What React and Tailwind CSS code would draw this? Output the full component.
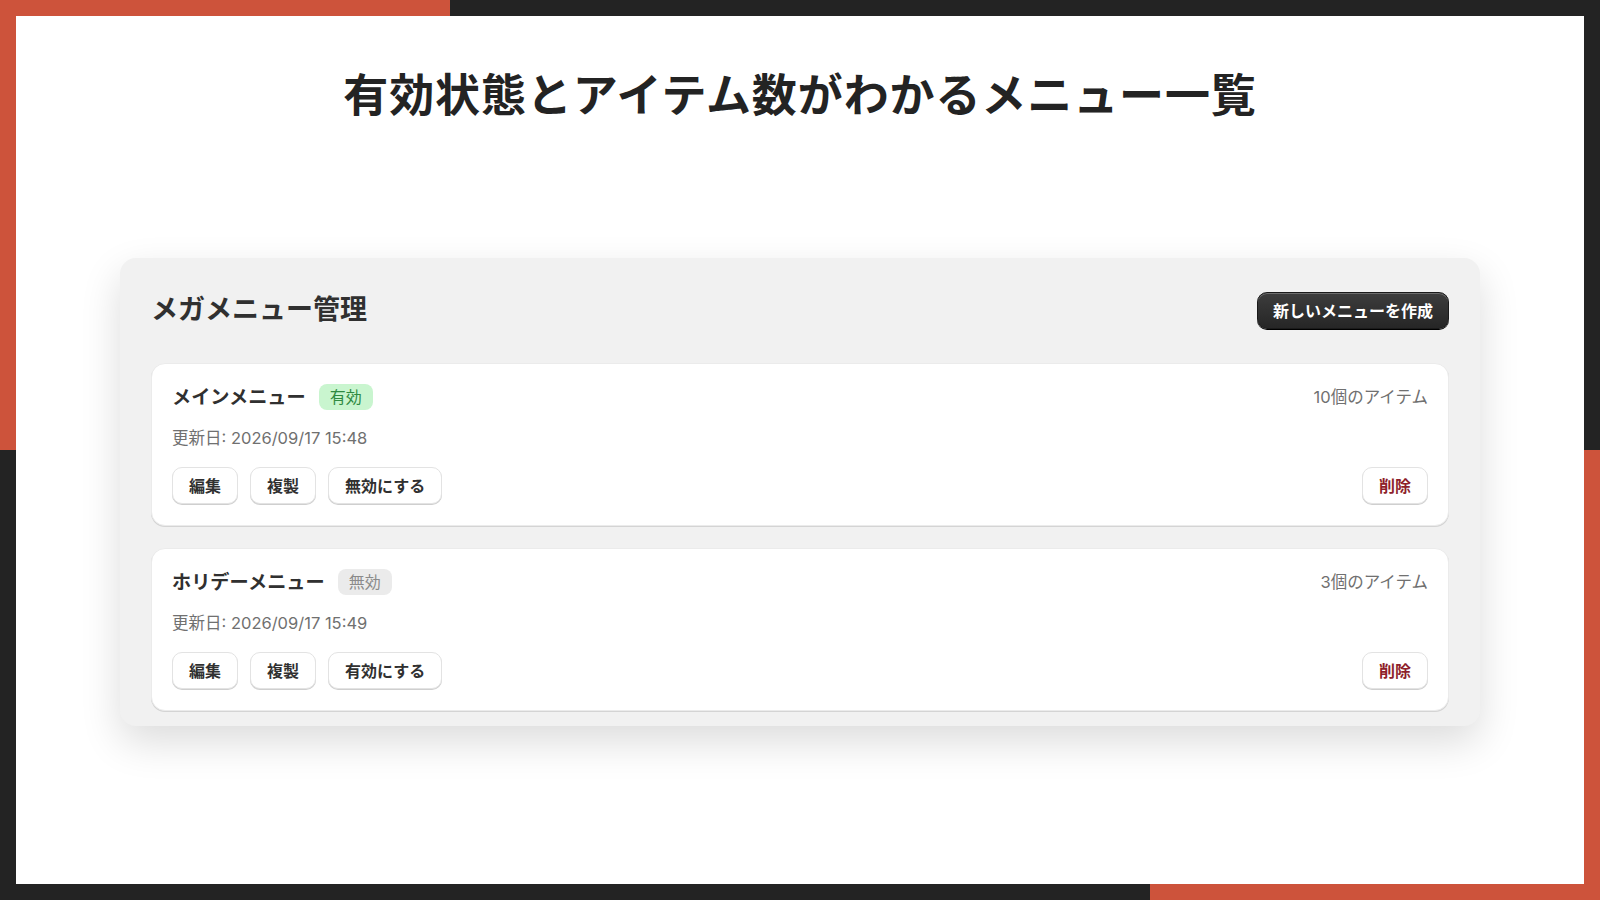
const font = { fontFamily: 'Inter, "Noto Sans CJK JP", sans-serif' }

const menus = [
  { name: 'メインメニュー', active: true, updated: '2026/09/17 15:48', items: 10 },
  { name: 'ホリデーメニュー', active: false, updated: '2026/09/17 15:49', items: 3 },
]

const Btn = ({ children, danger }) => (
  <button
    className={`h-[37px] px-[16px] rounded-[10px] bg-white text-[16px] font-bold leading-none border border-[#e3e3e3] shadow-[0_1px_0_#cfcfcf] ${
      danger ? 'text-[#8e1f2b]' : 'text-[#303030]'
    }`}
  >
    {children}
  </button>
)

const MenuCard = ({ menu }) => (
  <div className="bg-white rounded-[14px] border border-[#ebebeb] shadow-[0_1px_0_#d4d4d4] px-[20px] pt-[20px] pb-[21px]">
    <div className="flex items-center justify-between h-[26px]">
      <div className="flex items-center gap-[13px]">
        <span className="text-[19.2px] font-bold text-[#303030]">{menu.name}</span>
        {menu.active ? (
          <span className="h-[26px] px-[11px] flex items-center rounded-[8px] bg-[#c9f5cf] text-[#2f8a41] text-[16px]">
            有効
          </span>
        ) : (
          <span className="h-[26px] px-[11px] flex items-center rounded-[8px] bg-[#ebebeb] text-[#8a8a8a] text-[16px]">
            無効
          </span>
        )}
      </div>
      <span className="text-[16.5px] text-[#707070]">{menu.items}個のアイテム</span>
    </div>
    <p className="mt-[16px] text-[16.5px] text-[#707070] leading-[24px]">更新日: {menu.updated}</p>
    <div className="mt-[17px] flex items-center justify-between">
      <div className="flex gap-[12px]">
        <Btn>編集</Btn>
        <Btn>複製</Btn>
        <Btn>{menu.active ? '無効にする' : '有効にする'}</Btn>
      </div>
      <Btn danger>削除</Btn>
    </div>
  </div>
)

export default function App() {
  return (
    <div className="w-[1600px] h-[900px] bg-[#232323] relative overflow-hidden" style={font}>
      {/* frame accents */}
      <div className="absolute left-0 top-0 w-[450px] h-[16px] bg-[#cd533b]" />
      <div className="absolute left-0 top-0 w-[16px] h-[450px] bg-[#cd533b]" />
      <div className="absolute right-0 top-[450px] w-[16px] h-[450px] bg-[#cd533b]" />
      <div className="absolute right-0 bottom-0 w-[450px] h-[16px] bg-[#cd533b]" />

      <div className="absolute inset-[16px] bg-white flex flex-col items-center">
        <h1 className="mt-[52px] text-[45px] font-bold text-[#232323] leading-[56px] tracking-[0.9px]">
          有効状態とアイテム数がわかるメニュー一覧
        </h1>

        <div className="mt-[134px] w-[1360px] bg-[#f1f1f1] rounded-[16px] shadow-[0_16px_40px_rgba(0,0,0,0.14)] px-[31px] pt-[34px] pb-[15px]">
          <div className="flex items-center justify-between h-[37px]">
            <h2 className="text-[27px] font-bold text-[#303030]">メガメニュー管理</h2>
            <button className="h-[37px] px-[15px] rounded-[10px] bg-gradient-to-b from-[#3d3d3d] to-[#262626] text-white text-[16px] font-bold shadow-[0_1px_0_#000,inset_0_1px_0_rgba(255,255,255,0.25)] border border-[#1a1a1a]">
              新しいメニューを作成
            </button>
          </div>
          <div className="mt-[34px] flex flex-col gap-[22px]">
            {menus.map((m) => (
              <MenuCard key={m.name} menu={m} />
            ))}
          </div>
        </div>
      </div>
    </div>
  )
}
